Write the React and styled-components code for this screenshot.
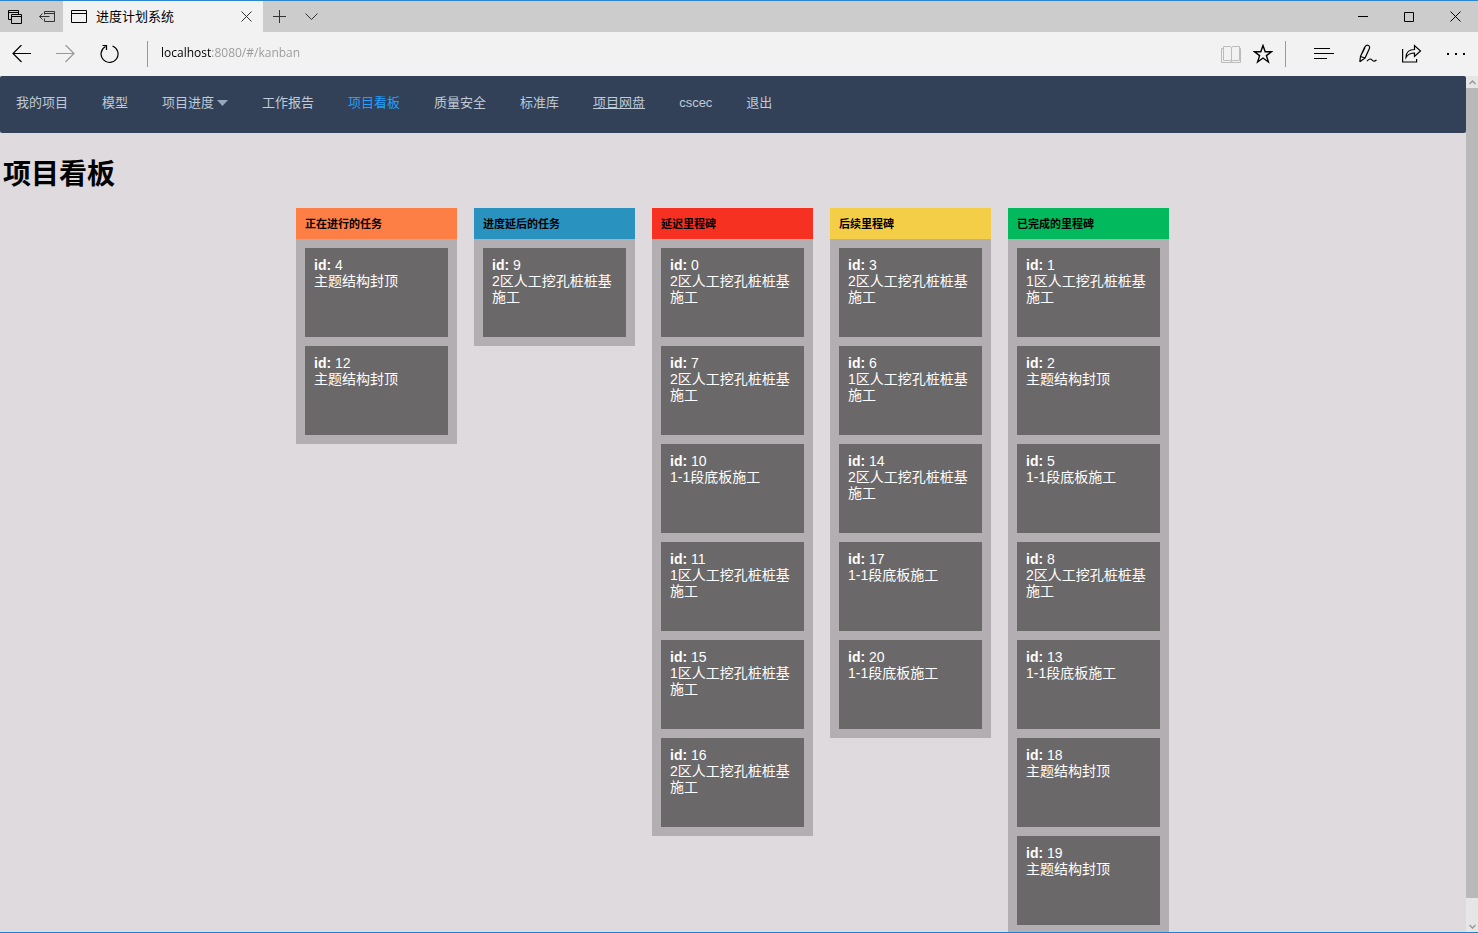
import React, {useState} from 'react';
import styled, {createGlobalStyle} from 'styled-components';

const Global = createGlobalStyle`
    * {
        box-sizing: border-box;
    }

    body {
        margin: 0;
        background: #dfdadd;
        color: #000;
        font-family: "Liberation Sans", "Noto Sans CJK SC", sans-serif;
    }

    button {
        padding: 0;
        border: 0;
        background: none;
        color: inherit;
        font: inherit;
        cursor: pointer;
    }

    ul {
        margin: 0;
        padding: 0;
        list-style: none;
    }
`;

const Window = styled.div`
    display: flex;
    flex-direction: column;
    height: 100vh;
    border-top: 1px solid #2d85cd;
    border-bottom: 1px solid #1883d7;
`;

const TitleBar = styled.header`
    display: flex;
    flex: none;
    height: 31px;
    background: #ccc;
`;

const BarButton = styled.button`
    display: flex;
    flex: none;
    align-items: center;
    justify-content: center;
    width: ${(props) => props.$width}px;
    height: 100%;
    color: ${(props) => props.$color || '#000'};
`;

const Tab = styled.div`
    display: flex;
    align-items: center;
    width: 200px;
    padding-left: 8px;
    background: #f2f2f2;
    font-size: 13px;
    line-height: 20px;
`;

const TabTitle = styled.span`
    flex: 1;
    padding-left: 9px;
`;

const Spacer = styled.div`
    flex: 1;
`;

const ToolBar = styled.div`
    display: flex;
    flex: none;
    align-items: center;
    height: 44px;
    background: #f2f2f2;
`;

const Divider = styled.div`
    width: 1px;
    height: 26px;
    margin: 0 ${(props) => props.$right}px 0 ${(props) => props.$left}px;
    background: #999;
`;

// 主机名深色，其余部分灰色
const Address = styled.input`
    flex: 1;
    min-width: 0;
    height: 24px;
    padding: 0 0 4px;
    border: 0;
    outline: 0;
    background: linear-gradient(to right, #000 51px, #999 51px);
    -webkit-background-clip: text;
    background-clip: text;
    color: transparent;
    font: 12px/20px "Open Sans", sans-serif;
`;

const Viewport = styled.div`
    display: flex;
    flex: 1;
    min-height: 0;
`;

const Page = styled.div`
    flex: 1;
    overflow: auto;
    scrollbar-width: none;
`;

const Nav = styled.nav`
    display: flex;
    align-items: center;
    gap: 34px;
    height: 57px;
    padding: 0 16px 4px;
    border-radius: 2px;
    background: #324157;
    color: #bfcbd9;
    font-size: 13px;
    line-height: 20px;
`;

const NavLink = styled.a`
    color: ${(props) => (props.$active ? '#20a0ff' : 'inherit')};
    text-decoration: ${(props) => (props.$underline ? 'underline' : 'none')};
    white-space: nowrap;
`;

const NavMenu = styled.button`
    display: flex;
    align-items: center;
    gap: 3px;
    white-space: nowrap;
`;

const Title = styled.h1`
    margin: 22px 3px 13px;
    font-size: 28px;
    line-height: 40px;
`;

const Board = styled.main`
    display: flex;
    align-items: flex-start;
    justify-content: center;
    gap: 17px;
    padding: 0 1px 16px 0;
`;

const Column = styled.section`
    width: 161px;
    background: #b2aeb1;
`;

const ColumnTitle = styled.h2`
    margin: 0;
    padding: 8px 9px 7px;
    background: ${(props) => props.$color};
    font-size: 11px;
    line-height: 16px;
`;

const CardList = styled.ul`
    display: flex;
    flex-direction: column;
    gap: 9px;
    && {
        padding: 9px;
    }
`;

const Card = styled.li`
    height: 89px;
    padding: 9px;
    background: #6b6869;
    color: #fff;
    font-size: 14px;
    line-height: 16px;
`;

const ScrollBar = styled.div`
    display: flex;
    flex-direction: column;
    width: 12px;
    background: #e6e6e6;
`;

const ScrollButton = styled.button`
    display: flex;
    align-items: center;
    justify-content: center;
    height: 12px;
    color: #999;
`;

const Thumb = styled.div`
    flex: 37;
    background: #b9b9b9;
`;

const ICONS = {
    tabs: <path d="M3.500 9.500h-3v-9h10v4M.5 2.500h10M3.500 4.500h10v9h-10zM3.500 6.500h10"/>,
    setAside: <path d="M5.500 3.500v-3h10v10h-10v-3M5.500 2.500h10M.5 5.500h10M3.500 2.500l-3 3 3 3"/>,
    page: <path d="M.5.5h15v12H.5zM.5 3.500h15"/>,
    close: <path d="M.5.5l10 10M10.500.5l-10 10"/>,
    plus: <path d="M6.500 0v13M0 6.500h13"/>,
    down: <path d="M.5.5l6 6 6-6"/>,
    minimize: <path d="M0 .5h10"/>,
    maximize: <path d="M.5.5h9v9h-9z"/>,
    back: <path d="M19 8.500H1M9.500 0L1 8.500 9.500 17"/>,
    forward: <path d="M0 8.500h18M9.500 0L18 8.500 9.500 17"/>,
    refresh: <path d="M12.500 2A8.500 8.500 0 1 1 5.500 2.500M2.500 1.500h4V6"/>,
    book: <path d="M2.500 1.500H9l1.500 1 1.500-1h6.500v14H12l-1.500 1-1.500-1H2.500zM10.500 2.500V17M2.500 3.500h-2v14h19v-14h-1"/>,
    star: <path d="M10 1.500l2.200 6.300h6.300l-5.100 3.800 2 6.400L10 14l-5.400 4 2-6.400L1.500 7.800h6.300z"/>,
    hub: <path d="M0 .5h16M0 5.500h20M0 10.500h13"/>,
    note: <path d="M.8 17.800L1.500 12.500 5.500 3.500Q7 .6 9 1.200t1.500 3L6 14 .8 17.800M1.500 12.500L6 14M6 3.500l-3 6M8 17.200c2.500-2.700 4-2.700 5-1.200s2.500 1.500 4.500 0"/>,
    share: <path d="M.6 5v13h14V15M4 13.500C4 8 7.500 5.500 12.500 5.500v-4l6 5.500-6 5.500V9C8.500 9 6 10 4 13.500z"/>,
    more: <path d="M0 1h2M8 1h2M16 1h2" strokeWidth="2"/>,
    scrollUp: <path d="M.5 4l3-3 3 3" strokeWidth="1.500"/>,
    scrollDown: <path d="M.5 1l3 3 3-3" strokeWidth="1.500"/>,
    caret: <path d="M0 0h11L5.500 6z" fill="#97a8be" stroke="none"/>,
};

function Icon({name, width, height, stroke = 1}) {
    return (
        <svg width={width} height={height} fill="none" stroke="currentColor" strokeWidth={stroke} aria-hidden="true">
            {ICONS[name]}
        </svg>
    );
}

const COLUMNS = [
    {
        title: '正在进行的任务',
        color: '#fd7f45',
        tasks: [[4, '主题结构封顶'], [12, '主题结构封顶']],
    },
    {
        title: '进度延后的任务',
        color: '#2a92bf',
        tasks: [[9, '2区人工挖孔桩桩基施工']],
    },
    {
        title: '延迟里程碑',
        color: '#f63122',
        tasks: [
            [0, '2区人工挖孔桩桩基施工'],
            [7, '2区人工挖孔桩桩基施工'],
            [10, '1-1段底板施工'],
            [11, '1区人工挖孔桩桩基施工'],
            [15, '1区人工挖孔桩桩基施工'],
            [16, '2区人工挖孔桩桩基施工'],
        ],
    },
    {
        title: '后续里程碑',
        color: '#f4ce46',
        tasks: [
            [3, '2区人工挖孔桩桩基施工'],
            [6, '1区人工挖孔桩桩基施工'],
            [14, '2区人工挖孔桩桩基施工'],
            [17, '1-1段底板施工'],
            [20, '1-1段底板施工'],
        ],
    },
    {
        title: '已完成的里程碑',
        color: '#02b95e',
        tasks: [
            [1, '1区人工挖孔桩桩基施工'],
            [2, '主题结构封顶'],
            [5, '1-1段底板施工'],
            [8, '2区人工挖孔桩桩基施工'],
            [13, '1-1段底板施工'],
            [18, '主题结构封顶'],
            [19, '主题结构封顶'],
        ],
    },
];

function BrowserBars() {
    const [url, setUrl] = useState('localhost:8080/#/kanban');
    return (
        <>
            <TitleBar>
                <BarButton $width={30} aria-label="标签页"><Icon name="tabs" width={14} height={14} /></BarButton>
                <BarButton $width={33} $color="#333" aria-label="搁置标签页"><Icon name="setAside" width={16} height={11} /></BarButton>
                <Tab>
                    <Icon name="page" width={16} height={13} />
                    <TabTitle>进度计划系统</TabTitle>
                    <BarButton $width={32} $color="#333" aria-label="关闭标签页"><Icon name="close" width={12} height={11} /></BarButton>
                </Tab>
                <BarButton $width={33} $color="#333" aria-label="新建标签页"><Icon name="plus" width={13} height={13} /></BarButton>
                <BarButton $width={31} $color="#333" aria-label="标签页预览"><Icon name="down" width={13} height={7} /></BarButton>
                <Spacer />
                <BarButton $width={46} aria-label="最小化"><Icon name="minimize" width={10} height={1} /></BarButton>
                <BarButton $width={46} aria-label="最大化"><Icon name="maximize" width={10} height={10} /></BarButton>
                <BarButton $width={46} aria-label="关闭"><Icon name="close" width={11} height={11} /></BarButton>
            </TitleBar>
            <ToolBar>
                <BarButton $width={44} aria-label="后退"><Icon name="back" width={20} height={18} stroke={1.2} /></BarButton>
                <BarButton $width={44} $color="#999" aria-label="前进"><Icon name="forward" width={20} height={18} stroke={1.2} /></BarButton>
                <BarButton $width={44} aria-label="刷新"><Icon name="refresh" width={20} height={20} stroke={1.2} /></BarButton>
                <Divider $left={15} $right={13} />
                <Address aria-label="地址" value={url} onChange={(e) => setUrl(e.target.value)} />
                <BarButton $width={32} $color="#bbb" aria-label="阅读视图"><Icon name="book" width={20} height={18} /></BarButton>
                <BarButton $width={32} aria-label="收藏"><Icon name="star" width={20} height={20} stroke={1.4} /></BarButton>
                <Divider $left={6} $right={16} />
                <BarButton $width={44} aria-label="中心"><Icon name="hub" width={20} height={12} /></BarButton>
                <BarButton $width={44} aria-label="做笔记"><Icon name="note" width={18} height={20} stroke={1.2} /></BarButton>
                <BarButton $width={44} aria-label="共享"><Icon name="share" width={20} height={20} stroke={1.2} /></BarButton>
                <BarButton $width={44} aria-label="更多"><Icon name="more" width={18} height={2} /></BarButton>
            </ToolBar>
        </>
    );
}

function App() {
    return (
        <Window>
            <Global />
            <BrowserBars />
            <Viewport>
                <Page>
                    <Nav>
                        <NavLink href="#/projects">我的项目</NavLink>
                        <NavLink href="#/model">模型</NavLink>
                        <NavMenu>项目进度<Icon name="caret" width={11} height={6} /></NavMenu>
                        <NavLink href="#/report">工作报告</NavLink>
                        <NavLink href="#/kanban" $active>项目看板</NavLink>
                        <NavLink href="#/quality">质量安全</NavLink>
                        <NavLink href="#/standard">标准库</NavLink>
                        <NavLink href="#/disk" $underline>项目网盘</NavLink>
                        <NavLink href="#/user">cscec</NavLink>
                        <NavLink href="#/logout">退出</NavLink>
                    </Nav>
                    <Title>项目看板</Title>
                    <Board>
                        {COLUMNS.map((column) => (
                            <Column key={column.title}>
                                <ColumnTitle $color={column.color}>{column.title}</ColumnTitle>
                                <CardList>
                                    {column.tasks.map(([id, name]) => (
                                        <Card key={id}>
                                            <strong>id:</strong> {id}
                                            <div>{name}</div>
                                        </Card>
                                    ))}
                                </CardList>
                            </Column>
                        ))}
                    </Board>
                </Page>
                <ScrollBar>
                    <ScrollButton aria-label="向上滚动"><Icon name="scrollUp" width={7} height={5} /></ScrollButton>
                    <Thumb />
                    <Spacer />
                    <ScrollButton aria-label="向下滚动"><Icon name="scrollDown" width={7} height={5} /></ScrollButton>
                </ScrollBar>
            </Viewport>
        </Window>
    );
}

export default App;
